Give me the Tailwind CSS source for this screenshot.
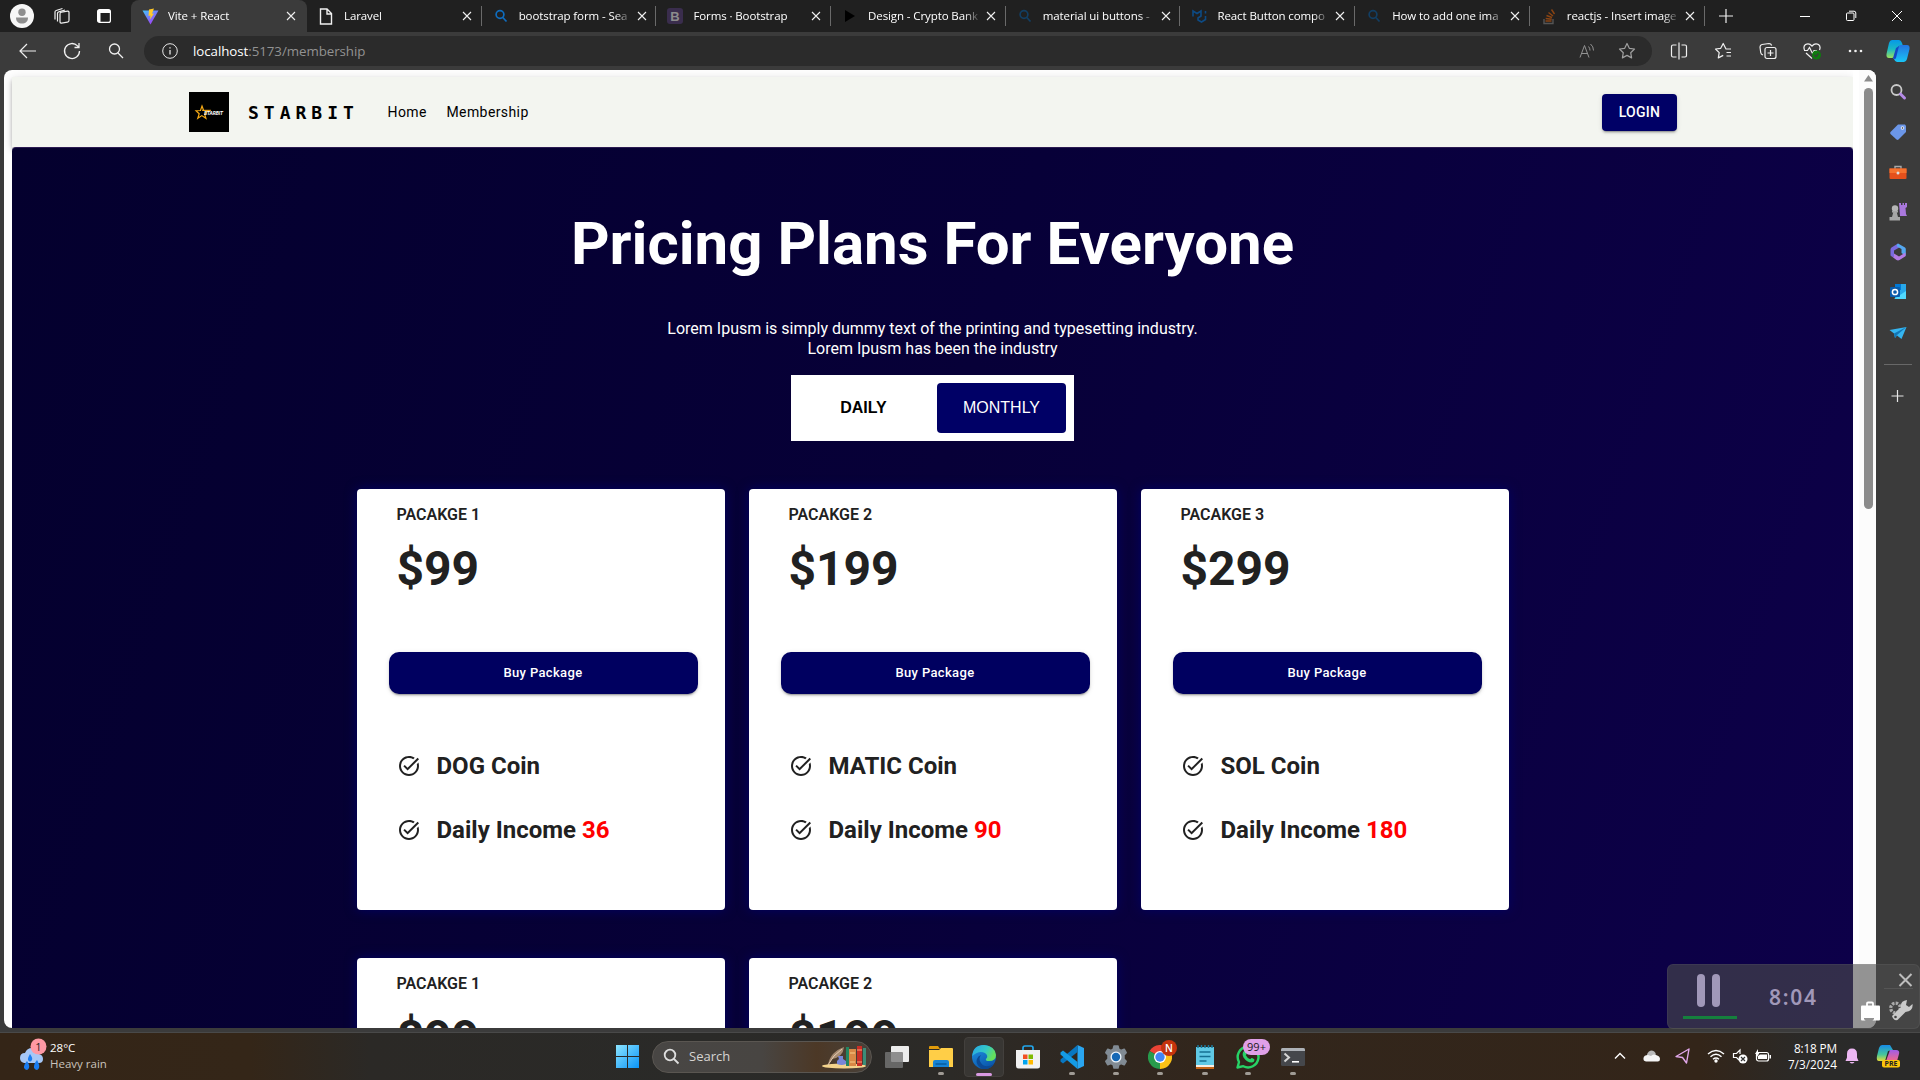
<!DOCTYPE html>
<html lang="en">
<head>
<meta charset="utf-8">
<title>Vite + React</title>
<script src="https://cdn.jsdelivr.net/npm/@tailwindcss/browser@4"></script>
</head>
<body class="w-[1920px] h-[1080px] overflow-hidden bg-[#3b3b3b] font-['Open_Sans',sans-serif] text-white relative flex flex-col">

<!-- tab strip -->
<header class="h-8 shrink-0 bg-[#202020] flex items-center">
  <div class="w-[131px] shrink-0 flex items-center">
    <svg class="ml-[10px] shrink-0" width="24" height="24" viewBox="0 0 24 24"><circle cx="12" cy="12" r="12" fill="#f7f7f7"/><circle cx="12" cy="8.300" r="3.700" fill="#8e8e8e"/><path d="M6 13.500h12c0 4-2.500 6-6 6s-6-2-6-6z" fill="#8e8e8e"/></svg>
    <svg class="ml-[19px] shrink-0" width="18" height="18" viewBox="0 0 18 18" fill="none" stroke="#f0f0f0" stroke-width="1.200"><rect x="7" y="4" width="9" height="11" rx="1.500" transform="skewY(-9) translate(0 2.500)"/><path d="M4.500 14.500V6.300q0-1.200 1.200-1.500L12 3M2 12.500V5q0-1.200 1.200-1.500L9.500 1.500"/></svg>
    <svg class="ml-[25px] shrink-0" width="16" height="16" viewBox="0 0 16 16"><rect x="1.600" y="1.600" width="12.800" height="12.800" rx="2" fill="none" stroke="#fff" stroke-width="1.200"/><path d="M2 2h12v3H2zM2 5h2.500v9H2z" fill="#fff"/></svg>
  </div>
  <nav id="tabs" class="flex h-8 text-[11.5px] tracking-[-0.1px]"></nav>
  <svg class="ml-[13px]" width="16" height="16" viewBox="0 0 16 16" stroke="#f0f0f0" stroke-width="1.200"><path d="M8 1v14M1 8h14"/></svg>
  <div class="ml-auto flex items-center pr-[17px] gap-[34px]">
    <svg width="12" height="12" viewBox="0 0 12 12" stroke="#fff"><path d="M1 6.500h10"/></svg>
    <svg width="12" height="12" viewBox="0 0 12 12" stroke="#fff" fill="none"><rect x="1.500" y="3" width="7.500" height="7.500" rx="1"/><path d="M4 1.200h5q1.800 0 1.800 1.800v5"/></svg>
    <svg width="12" height="12" viewBox="0 0 12 12" stroke="#fff"><path d="M1 1l10 10M11 1L1 11"/></svg>
  </div>
</header>

<!-- toolbar -->
<div class="h-[38px] shrink-0 flex items-center">
  <div class="w-[144px] shrink-0 flex items-center gap-[24px] pl-[18px]">
    <svg width="20" height="20" viewBox="0 0 20 20" fill="none" stroke="#f0f0f0" stroke-width="1.200"><path d="M18 10H2M9 3l-7 7 7 7"/></svg>
    <svg width="20" height="20" viewBox="0 0 20 20" fill="none" stroke="#f0f0f0" stroke-width="1.300"><path d="M17.500 10A7.500 7.500 0 1 1 15.500 4.900L17 6.500M17 2v4.500h-4.500"/></svg>
    <svg width="20" height="20" viewBox="0 0 20 20" fill="none" stroke="#f0f0f0" stroke-width="1.300"><circle cx="8.500" cy="8" r="5"/><path d="M12 12l5 5"/></svg>
  </div>
  <div class="w-[1508px] h-[30px] rounded-full bg-[#2b2b2b] flex items-center">
    <svg class="ml-[18px]" width="16" height="16" viewBox="0 0 16 16" fill="none" stroke="#e8e8e8"><circle cx="8" cy="8" r="7.300"/><path d="M8 7v4.500M8 4.300v1.300" stroke-width="1.300"/></svg>
    <div class="ml-[15px] pt-px text-[13.3px] leading-none tracking-[-0.05px] text-[#929292]"><span class="text-white">localhost</span>:5173/membership</div>
    <svg class="ml-auto" width="18" height="18" viewBox="0 0 18 18" fill="none" stroke="#929292"><path d="M2 15.500L6.500 3.500 11 15.500M3.500 11.500h6M10.500 4.500q1.500 1.500 1.500 4M12.500 2q3 2.500 3 6.500"/></svg>
    <svg class="ml-[22px] mr-[16px]" width="18" height="18" viewBox="0 0 18 18" fill="none" stroke="#a0a0a0" stroke-width="1.200" stroke-linejoin="round"><path d="M9 1.500l2.300 4.800 5.200.700-3.800 3.700.900 5.200L9 13.400l-4.600 2.500.900-5.200L1.500 7l5.200-.700z"/></svg>
  </div>
  <div class="flex items-center gap-[26px] pl-[18px]">
    <svg width="18" height="18" viewBox="0 0 18 18" fill="none" stroke="#f0f0f0" stroke-width="1.200"><path d="M9 .5v17M6.500 3H3q-1.500 0-1.500 1.500v9Q1.500 15 3 15h3.500M11.500 3H15q1.500 0 1.500 1.500v9Q16.500 15 15 15h-3.500"/></svg>
    <svg width="19" height="18" viewBox="0 0 19 18" fill="none" stroke="#f0f0f0" stroke-width="1.200" stroke-linejoin="round"><path d="M17 7h-5L9.200 1.500 6.700 6.300 1.500 7l3.700 3.700-.9 5.200 4.900-2.500M12.500 10.500H17M12.500 14H17"/></svg>
    <svg width="18" height="18" viewBox="0 0 18 18" fill="none" stroke="#f0f0f0" stroke-width="1.200"><rect x="6" y="5.500" width="11" height="11" rx="2"/><path d="M11.500 8v6M8.500 11h6M4 13Q2 12.500 1.700 10.500L1 5Q1 3 3 2.500L10 1.500Q12 1.500 12.700 3.500"/></svg>
    <svg width="18" height="18" viewBox="0 0 18 18" fill="none" stroke="#f0f0f0" stroke-width="1.200"><path d="M1.500 8Q0 4.500 2.500 2.500 6 .5 9 4q3-3.500 6.500-1.500Q18 4.500 16.500 8M3 11l6 5.500M1 8.500h3.500L6.500 5.500l3 6 1.500-3h3"/><circle cx="13.500" cy="13" r="4.500" fill="#0f7b0f" stroke="none"/><path d="M11.500 13l1.500 1.500 2.500-3" stroke="#3b3b3b"/></svg>
    <svg width="16" height="16" viewBox="0 0 16 16" fill="#f0f0f0"><circle cx="3" cy="8" r="1.300"/><circle cx="8.500" cy="8" r="1.300"/><circle cx="14" cy="8" r="1.300"/></svg>
    <svg class="-ml-[3px]" width="24" height="24" viewBox="0 0 24 24"><defs><linearGradient id="c1" x2="0" y2="1"><stop stop-color="#0797e8"/><stop offset=".5" stop-color="#19b8c5"/><stop offset="1" stop-color="#9be25c"/></linearGradient><linearGradient id="c2" x2="0" y2="1"><stop stop-color="#2374e1"/><stop offset="1" stop-color="#19c5f5"/></linearGradient></defs><path d="M6 1h7q2 0 3 3l1 3h-3q-2 0-3 4l-2 6q-.5 2-3 2H3q-3 0-2.500-4L3 4q.800-3 3-3z" fill="url(#c1)"/><path d="M18 23h-7q-2 0-3-3l-1-1q2 0 3-4l2-7q.500-2 3-2h6q3 0 2.500 4L21 20q-.8 3-3 3z" fill="url(#c2)"/><path d="M10 9l3-2-3 12q-1 2-3 0z" fill="#1348c4"/></svg>
  </div>
</div>

<!-- viewport and sidebar -->
<div class="h-[958px] shrink-0 flex pl-1">
  <main class="w-[1872px] h-[958px] bg-white rounded-lg overflow-hidden flex">
    <div class="w-[1849px] mr-[6px] pl-2 pt-[7px] h-[958px] overflow-hidden font-[Roboto,sans-serif]">
      <div class="h-[70px] bg-[#f3f5f0] pl-[177px] pr-[176px] flex items-center shadow-[0_2px_4px_-1px_rgba(0,0,0,.2),0_4px_5px_rgba(0,0,0,.14),0_1px_10px_rgba(0,0,0,.12)]">
        <svg width="40" height="40" viewBox="0 0 40 40"><rect width="40" height="40"/><path d="M13 14l1.600 4.500 5 .3-4 3 1.300 4.500-4.100-2.700-4 2.700 1.400-4.600-3.200-3 4.500-.2z" fill="none" stroke="#f5a914" stroke-width="1.200"/><path d="M13 18.300h9" stroke="#f5a914"/><text x="15" y="23" font-family="Roboto" font-style="italic" font-weight="700" font-size="5" fill="#fff" textLength="19">STARBIT</text></svg>
        <span class="ml-[19px] w-[139.5px] font-['DejaVu_Sans_Mono',monospace] font-bold text-[18px] tracking-[5px] text-black">STARBIT</span>
        <span class="w-[59px] text-[14px] tracking-[0.4px] text-black">Home</span>
        <span class="text-[14px] tracking-[0.4px] text-black">Membership</span>
        <button class="ml-auto w-[75px] h-[37px] mt-[1px] rounded bg-[#000066] text-[14px] font-medium tracking-[0.3px] shadow-[0_3px_1px_-2px_rgba(0,0,0,.2),0_2px_2px_rgba(0,0,0,.14),0_1px_5px_rgba(0,0,0,.12)]">LOGIN</button>
      </div>
      <section class="relative h-[1400px] rounded-t bg-linear-[108deg,#04002e_0%,#070038_45%,#0e004c_100%] border-t border-[#2b1a52] flex flex-col items-center">
        <h1 class="mt-[60px] text-[60px] leading-[72px] font-bold whitespace-nowrap">Pricing Plans For Everyone</h1>
        <p class="mt-[39px] text-center text-[16px] leading-[20px]">Lorem Ipusm is simply dummy text of the printing and typesetting industry.<br>Lorem Ipusm has been the industry</p>
        <div class="mt-[16px] w-[283px] h-[66px] bg-white p-2 flex text-[16px] font-['Liberation_Sans',Arial,sans-serif]">
          <div class="w-[129px] mr-[9px] flex items-center justify-center text-black font-bold">DAILY</div>
          <div class="w-[129px] rounded bg-[#000066] flex items-center justify-center">MONTHLY</div>
        </div>
        <div id="plans" class="mt-12 w-[1152px] grid grid-cols-3 gap-x-6 gap-y-12 text-[#212121]"></div>
      </section>
    </div>
    <div class="w-[17px] pl-px flex flex-col items-center pt-[5px] bg-[#fcfcfc]">
      <svg width="9" height="7" viewBox="0 0 9 7" fill="#8b8b8b"><path d="M4.500 0L9 6.500H0z"/></svg>
      <div class="mt-[6px] w-[9px] h-[421px] rounded-full bg-[#8b8b8b]"></div>
    </div>
  </main>
  <aside class="w-11 flex flex-col items-center pt-[13px] pr-px gap-[22.100px]">
    <svg class="shrink-0" width="18" height="18" viewBox="0 0 18 18" fill="none"><circle cx="7.500" cy="7" r="5" stroke="#c9c9c9" stroke-width="1.800"/><path d="M11.500 11l4 4" stroke="#b58be8" stroke-width="3" stroke-linecap="round"/></svg>
    <svg class="shrink-0" width="18" height="18" viewBox="0 0 18 18"><path d="M9 1.500L16 1.500 17 3v6L9.500 16.500q-1 .8-2 0L1.500 11q-.8-1 0-2z" fill="#6b96e8"/><circle cx="13.500" cy="5" r="1.800" fill="#e4ecff"/><circle cx="13.500" cy="5" r=".8" fill="#333"/></svg>
    <svg class="shrink-0" width="18" height="18" viewBox="0 0 18 18"><path d="M6 6V3.500h6V6" fill="none" stroke="#a8a8a8" stroke-width="1.400"/><path d="M.5 5.500h17V15q0 1-1 1h-15q-1 0-1-1z" fill="#e5501b"/><path d="M.5 5.500h17V10H.5z" fill="#f5722e"/><circle cx="9" cy="10" r="1.500" fill="#ddd"/></svg>
    <svg class="shrink-0" width="18" height="18" viewBox="0 0 18 18"><path d="M10 0h2v2h1.500V0h1.500v2h1V0h2v4l-1.500 1 .5 6 1 2h-7z" fill="#a978dd"/><circle cx="6" cy="5.500" r="3.200" fill="#b5b5b5"/><path d="M3 8h6v1.500H7.800L9 14h2v3.500H.5V14H3l1.200-4.500H3z" fill="#a6a6a6"/></svg>
    <svg class="shrink-0" width="18" height="18" viewBox="0 0 18 18"><path d="M9 .6L2.500 4.500q-1 .8-1 2v6L5 14.500V7.500l7-4z" fill="#7a6be0"/><path d="M9 .6l7 4q.8.600.8 1.600V13L12.500 10V6L8 3.500q-1-1.500 1-2.900z" fill="#55a8f0"/><path d="M1.500 12.500l6 4.500q1.500.8 3 0l6-3.800V9.500L10 13.500 5 10.500v3.800z" fill="#b47be5"/></svg>
    <svg class="shrink-0" width="18" height="18" viewBox="0 0 18 18"><path d="M6 1h11v15H6z" fill="#28a8ea"/><path d="M6 1h6v6H6z" fill="#0078d4"/><path d="M17 8v8H5z" fill="#50d9ff"/><rect x="1" y="4" width="10" height="10" rx="1" fill="#0a5cab"/><circle cx="6" cy="9" r="2.600" fill="none" stroke="#fff" stroke-width="1.500"/></svg>
    <svg class="shrink-0" width="18" height="18" viewBox="0 0 18 18"><path d="M.5 6L17.500 3 12.500 15 8 11.500 6 14 5 9.500z" fill="#35b5f0"/><path d="M17.500 3L5 9.500 6 14l2-3z" fill="#1177b8"/></svg>
    <div class="w-7 h-px shrink-0 bg-[#686868]"></div>
    <svg class="shrink-0" width="18" height="18" viewBox="0 0 18 18" stroke="#e6e6e6" stroke-width="1.200"><path d="M8.500 3v12M2.500 9h12"/></svg>
  </aside>
</div>
<div class="h-[5px] shrink-0 border-b border-[#494949]"></div>

<!-- taskbar -->
<footer class="relative h-[47px] shrink-0 bg-linear-[90deg,#342517_0px,#342618_250px,#2b2926_370px,#2a2a28_700px,#2c2a27_950px,#32261c_1200px,#332519_1700px,#2a2a29_1810px,#2a2a2a_1920px] flex items-center">
  <div class="flex items-center w-[616px] pl-[18px] text-[11.500px] leading-4">
    <svg class="-mt-[2px]" width="32" height="38" viewBox="0 0 32 38"><path d="M6 26q-4-1-4-5 0-5 5-5 2-5 7-5 6 0 7 6 4 1 4 5t-4 4z" fill="#a6c7f6"/><path d="M12 17q3 4 2 6-2 3-4 0-.5-2 2-6zM9 24q3 4 2 7-2 4-5 0-.5-3 3-7zM19 23q3 5 2 8-2 4-5 0-.5-4 3-8z" fill="#1a7cf0"/><circle cx="20.500" cy="9.500" r="8" fill="#ff99a4"/><text x="20.500" y="13.500" text-anchor="middle" font-size="11" font-family="Open Sans" fill="#222">1</text></svg>
    <div class="-mt-[2px]"><div>28°C</div><div class="text-[#c9c3bc]">Heavy rain</div></div>
  </div>
  <svg width="23" height="23" viewBox="0 0 23 23"><defs><linearGradient id="w" x2="1" y2="1"><stop stop-color="#8be4ff"/><stop offset="1" stop-color="#0a94f8"/></linearGradient></defs><path d="M0 0h11v11H0zM12 0h11v11H12zM0 12h11v11H0zM12 12h11v11H12z" fill="url(#w)"/></svg>
  <div class="ml-[13px] w-[220px] h-8 rounded-full bg-linear-[90deg,#484644_0%,#484542_50%,#4c3826_75%,#48413a_100%] border border-[#5a5651] flex items-center">
    <svg class="ml-[10px]" width="17" height="17" viewBox="0 0 17 17" fill="none" stroke="#dedede" stroke-width="1.800"><circle cx="7" cy="7" r="5.300"/><path d="M11 11l4.500 4.500"/></svg>
    <span class="ml-[9px] text-[13px] text-[#d6d4d2]">Search</span>
    <svg class="ml-auto mr-[4px]" width="46" height="26" viewBox="0 0 46 26"><ellipse cx="23" cy="22" rx="22" ry="2.500" fill="#f4d38c"/><path d="M7 21Q9 8 23 3 22 13 11 15z" fill="#a68b72"/><path d="M7 21Q12 11 21 5" stroke="#e5cdb3" fill="none"/><path d="M17 12h5v3l3 2v3q-4 2-9 0v-3l2-2z" fill="#7886d8"/><path d="M25 3h3v19h-3z" fill="#238561"/><path d="M28 5h7v17h-7z" fill="#d98845"/><path d="M29 9h5M29 18h5" stroke="#f6cc89"/><path d="M36 2h5v20h-5z" fill="#c92e26"/><path d="M36 6h5M36 18h5" stroke="#f6a87c"/><path d="M42 4h3v17h-3z" fill="#3b8d78"/></svg>
  </div>
  <svg class="ml-[13px]" width="24" height="24" viewBox="0 0 24 24"><rect x="6" y="1" width="18" height="16" rx="1" fill="#ececec"/><rect x="0" y="7" width="18" height="16" rx="1" fill="#777" fill-opacity=".8"/></svg>
  <div class="ml-[20px] relative"><svg width="24" height="24" viewBox="0 0 24 24"><path d="M0 2q0-1 1-1h8l2 3H0z" fill="#e19b0a"/><path d="M0 5h10l2-2h11q1 0 1 1v18H0z" fill="#ffce47"/><path d="M4 22v-5q0-2 2-2h12q2 0 2 2v5z" fill="#1783d4"/><path d="M6.500 19h11" stroke="#075d9f" stroke-width="1.500"/></svg><i class="absolute left-[9px] top-[27px] w-[6px] h-[3px] rounded-full bg-[#a09b95]"></i></div>
  <div class="ml-[11px] w-10 h-10 rounded border border-[#43403d] bg-[#383633] relative flex items-center justify-center"><svg width="24" height="24" viewBox="0 0 24 24"><defs><linearGradient id="e1" x2="1" y2=".4"><stop stop-color="#26a5e9"/><stop offset=".6" stop-color="#35c9c5"/><stop offset="1" stop-color="#65e05b"/></linearGradient><linearGradient id="e2" x2=".5" y2="1"><stop stop-color="#2196e6"/><stop offset="1" stop-color="#0b58ac"/></linearGradient></defs><circle cx="12" cy="12" r="12" fill="url(#e2)"/><path d="M.3 11Q1 0 12 0q11 1 12 10 0 6-7 6-4 0-3-2 3-3-1-6Q7 5 .3 11z" fill="url(#e1)"/><path d="M9 10q-3 4 0 8 4 6 13 1-4 6-12 5Q3 19 5 14q1-3 4-4z" fill="#0c4a94"/></svg><i class="absolute left-[11px] top-[35px] w-4 h-[3px] rounded-full bg-[#d99ae2]"></i></div>
  <svg class="ml-[12px]" width="24" height="24" viewBox="0 0 24 24"><path d="M7 6V3q0-2 2-2h6q2 0 2 2v3" fill="none" stroke="#22a7ed" stroke-width="1.700"/><path d="M0 5h24v16q0 2.500-2.500 2.500h-19Q0 23.500 0 21z" fill="#f1f1f1"/><path d="M7 9.500h4.500V14H7z" fill="#f25022"/><path d="M12.500 9.500H17V14h-4.500z" fill="#7fba00"/><path d="M7 15h4.500v4.500H7z" fill="#00a4ef"/><path d="M12.500 15H17v4.500h-4.500z" fill="#ffb900"/></svg>
  <div class="ml-[20px] relative"><svg width="24" height="24" viewBox="0 0 24 24"><path d="M17.500 0L24 3v18l-6.500 3z" fill="#2aa6f1"/><path d="M17.500 0v7L3 18.500.5 16.500v-2z" fill="#0877c2"/><path d="M17.500 24v-7L3 5.500.5 7.500v2z" fill="#149be5"/></svg><i class="absolute left-[9px] top-[27px] w-[6px] h-[3px] rounded-full bg-[#a09b95]"></i></div>
  <div class="ml-[20px] relative"><svg width="24" height="24" viewBox="0 0 24 24"><path d="M10 1h4l.8 3.200 2.200 1.200 3.200-1.200 2 3.500-2.200 2.300v4l2.200 2.300-2 3.500-3.200-1.200-2.200 1.200L14 23h-4l-.8-3.200L7 18.600l-3.200 1.200-2-3.500L4 14v-4L1.800 7.700l2-3.500L7 5.400l2.200-1.200z" fill="#818b94" stroke="#818b94" stroke-width="1.500" stroke-linejoin="round"/><circle cx="12" cy="12" r="5.500" fill="#ecf4fc"/><circle cx="12" cy="12" r="4.200" fill="#1568b6"/></svg><i class="absolute left-[9px] top-[27px] w-[6px] h-[3px] rounded-full bg-[#a09b95]"></i></div>
  <div class="ml-[20px] relative"><svg width="24" height="24" viewBox="0 0 24 24"><path d="M12 12L1.600 6A12 12 0 0 1 22.400 6z" fill="#ea4335"/><path d="M12 12L22.400 6A12 12 0 0 1 12 24z" fill="#fbc116"/><path d="M12 12v12A12 12 0 0 1 1.600 6z" fill="#279b4c"/><path d="M12 24l6-9-6-3z" fill="#fbc116"/><circle cx="12" cy="12" r="6" fill="#fff"/><circle cx="12" cy="12" r="4.700" fill="#4285f4"/></svg><b class="absolute left-[13px] -top-[5px] w-4 h-4 rounded-full bg-[#c5330d] text-[10px] leading-4 text-center font-semibold">N</b><i class="absolute left-[9px] top-[27px] w-[6px] h-[3px] rounded-full bg-[#a09b95]"></i></div>
  <div class="ml-[21px] relative"><svg width="24" height="24" viewBox="0 0 24 24"><path d="M3 2h18v19H3z" fill="#60c9e5"/><path d="M3 20h18v2H3z" fill="#f7eee4"/><path d="M3 22h18v2H3z" fill="#c46416"/><path d="M5 0v3M8.500 0v3M12 0v3M15.500 0v3M19 0v3" stroke="#1b789b" stroke-width="1.500"/><path d="M6.500 7h11M6.500 11.500h11M6.500 16h7" stroke="#147092" stroke-width="1.600"/></svg><i class="absolute left-[9px] top-[27px] w-[6px] h-[3px] rounded-full bg-[#a09b95]"></i></div>
  <div class="ml-[19px] relative"><svg width="24" height="24" viewBox="0 0 24 24"><path d="M1.500 22.500L3 17a10.400 10.400 0 1 1 4.300 4.200z" fill="none" stroke="#27d366" stroke-width="2.400" stroke-linejoin="round"/><path d="M8 6q1-.7 1.800.5l.8 2q.2.800-.8 1.700 1.500 3 4.500 4 1-1.500 1.800-1.200l2.200 1.200q.7 3-2.800 3.300Q11 17.500 7.500 12.500 5.500 8.500 8 6z" fill="#27d366"/></svg><b class="absolute left-[7px] -top-[6px] w-[27px] h-4 rounded-full bg-[#dfa0e8] text-[#1b1b1b] text-[11px] leading-4 text-center font-normal">99+</b><i class="absolute left-[9px] top-[27px] w-[6px] h-[3px] rounded-full bg-[#a09b95]"></i></div>
  <div class="ml-[21px] relative"><svg width="24" height="24" viewBox="0 0 24 24"><rect y="3" width="24" height="18" rx="1.500" fill="#45474b"/><path d="M0 4.500Q0 3 1.500 3h21Q24 3 24 4.500V6H0z" fill="#aeb2b7"/><path d="M3.500 8.500l4.500 4-4.500 4" fill="none" stroke="#d5d5d5" stroke-width="2"/><path d="M11 16.800h7" stroke="#fff" stroke-width="1.600"/></svg><i class="absolute left-[9px] top-[27px] w-[6px] h-[3px] rounded-full bg-[#a09b95]"></i></div>

  <div class="ml-auto -mt-[2px] flex items-center pr-[20px]">
    <svg class="mr-[17px]" width="12" height="12" viewBox="0 0 12 12" fill="none" stroke="#fff" stroke-width="1.400"><path d="M1 8.500l5-5 5 5"/></svg>
    <svg class="mr-[15px]" width="17" height="14" viewBox="0 0 17 14"><path d="M4 9Q3 3 8 1.500q4 0 5 4z" fill="#b9b9b9"/><path d="M3 12.500q-3-.5-2.500-3.500Q1 6 5 6l3 1q2-2.500 5-1 4 1 4 4t-3 2.500z" fill="#f5f5f5"/></svg>
    <svg class="mr-[16px]" width="16" height="16" viewBox="0 0 16 16" fill="none" stroke="#e3a8ec" stroke-width="1.400" stroke-linejoin="round"><path d="M14 1L1 8.500l6.500 1 4 5.500z"/></svg>
    <svg class="mr-[7px]" width="18" height="14" viewBox="0 0 18 14" fill="none" stroke="#fff" stroke-width="1.400"><path d="M1 5q8-7 16 0M3.500 7.700q5.500-5 11 0M6 10.200q3-2.500 6 0"/><circle cx="9" cy="12" r="1" fill="#fff"/></svg>
    <svg class="mr-[6px]" width="16" height="16" viewBox="0 0 16 16" fill="none" stroke="#fff" stroke-width="1.200"><path d="M7 12L4.500 9.500H1.500v-4h3L8 2v4"/><circle cx="11" cy="11" r="4.500" fill="#fff" stroke="none"/><path d="M9 9l4 4M13 9l-4 4" stroke="#333"/></svg>
    <svg class="mr-[15px]" width="18" height="14" viewBox="0 0 18 14"><rect x="2.500" y="3.500" width="12" height="8.500" rx="2" fill="none" stroke="#fff" stroke-width="1.200"/><path d="M6 5.500h7V10H4V7zM15.500 6h1.500v3.500h-1.500z" fill="#fff"/><path d="M4 0L1 5h2v3l3-5H4z" fill="#fff"/></svg>
    <div class="w-[50px] flex flex-col items-end text-[11.800px] leading-4 whitespace-nowrap"><span class="tracking-[-0.15px]">8:18 PM</span><span>7/3/2024</span></div>
    <svg class="ml-[8px]" width="14" height="16" viewBox="0 0 14 16" fill="#ecb7f2"><path d="M7 .5q5 0 5 5.500v3.500L13.500 13H.5L2 9.500V6Q2 .5 7 .5zM4.500 14h5q-2.500 3-5 0z"/></svg>
    <svg class="ml-[17px]" width="24" height="24" viewBox="0 0 24 24"><defs><linearGradient id="p1" x2="0" y2="1"><stop stop-color="#168be8"/><stop offset=".6" stop-color="#46c69a"/><stop offset="1" stop-color="#e5dc37"/></linearGradient><linearGradient id="p2" x2="0" y2="1"><stop stop-color="#a05de8"/><stop offset="1" stop-color="#f36a87"/></linearGradient></defs><path d="M6 1h8l3 5-5 1-3 10H3q-3 0-2-5L3 4q1-3 3-3z" fill="url(#p1)"/><path d="M14 6h6q4 0 3 4l-2 7H10z" fill="url(#p2)"/><rect x="6" y="16" width="18" height="7.500" rx="2" fill="#fcc50b"/><text x="15" y="22.300" text-anchor="middle" font-family="Open Sans" font-size="7" font-weight="700" fill="#222">PRE</text></svg>
  </div>
</footer>

<!-- floating recorder panel -->
<div class="absolute left-[1667px] top-[964px] w-[253px] h-[65px] rounded-md border border-white/5 bg-[#4d4d4d]/60 flex">
  <div class="ml-[15px] w-[54px] flex flex-col items-center pt-[9px]">
    <div class="flex gap-[7px] -ml-[4px]"><i class="w-2 h-[33px] rounded-sm bg-[#a198b9]"></i><i class="w-2 h-[33px] rounded-sm bg-[#a198b9]"></i></div>
    <div class="mt-[9px] w-[54px] h-[3px] bg-[#15803d]"></div>
  </div>
  <div class="ml-[32px] pt-[17px] w-[91px] text-[21px] leading-[30px] font-semibold tracking-[1.700px] text-[#a198b9] font-['Noto_Sans',sans-serif]">8:04</div>
  <svg class="mt-[36px] shrink-0" width="22" height="24" viewBox="0 0 22 24"><path d="M7 5V2.500q0-1 1-1h4q1 0 1 1V5" fill="none" stroke="#fff" stroke-width="1.800"/><rect x="1" y="4.500" width="19" height="15" rx="1" fill="#fff"/><path d="M4 17h10v1l-5 6-5-6z" fill="#929292"/></svg>
  <svg class="absolute left-[216px] top-[7px]" width="29" height="50" viewBox="0 0 29 50"><path d="M15.500 2l12 12M27.500 2l-12 12" stroke="#bdbdbd" stroke-width="2"/><path d="M0 16.500h29" stroke="#555"/><circle cx="11.500" cy="36" r="4.800" fill="none" stroke="#aaa" stroke-width="3.200" stroke-dasharray="2.500 1.200"/><path d="M8 44l9-9q-1-6 6-7l-1 5 3 2 3.500-3q1 7-7 8l-8 8q-4 1-5.500-4z" fill="#c9c9c9"/><circle cx="11.500" cy="45" r="1.300" fill="#444"/><circle cx="12" cy="36.500" r="1.500" fill="#444"/></svg>
</div>

<script>
const search = c => `<svg width="14" height="14" viewBox="0 0 14 14" fill="none" stroke="${c}" stroke-width="1.700"><circle cx="6" cy="5.500" r="3.900"/><path d="M8.800 8.500L12.500 12.500"/></svg>`;
const tabs = [
  ['Vite + React', '<svg width="17" height="17" viewBox="0 0 17 17"><defs><linearGradient id="v" x2=".7" y2="1"><stop stop-color="#41c5fb"/><stop offset="1" stop-color="#a639f5"/></linearGradient></defs><path d="M.5 2.500L16.500 2.500 8.500 16.500z" fill="url(#v)"/><path d="M12 .5L7 1.500 6.500 8l2-.4L8 11.500l4-6-2 .2z" fill="#ffc928"/></svg>'],
  ['Laravel', '<svg width="14" height="17" viewBox="0 0 14 17" fill="none" stroke="#f0f0f0" stroke-width="1.400"><path d="M1.500 1h6.500l4.500 4.500V16h-11zM8 1v5h4.500"/></svg>'],
  ['bootstrap form - Sea', search('#0f6cbd')],
  ['Forms · Bootstrap', '<svg width="16" height="16" viewBox="0 0 16 16"><rect width="16" height="16" rx="3" fill="#3a2d4d"/><text x="8" y="12.500" text-anchor="middle" font-family="Liberation Sans" font-weight="700" font-size="13" fill="#8c8c8c">B</text></svg>'],
  ['Design - Crypto Bank', '<svg width="14" height="14" viewBox="0 0 14 14"><path d="M2 1l10 6-10 6z" fill="#000"/></svg>'],
  ['material ui buttons -', search('#123e63')],
  ['React Button compo', '<svg width="15" height="14" viewBox="0 0 15 14" fill="none" stroke="#0d4a83" stroke-width="1.600"><path d="M1 7.500V2l4 2.500L9 2v5l-3 2v2l3.500 2 4-2.500V7M13.500 2v2.500"/></svg>'],
  ['How to add one ima', search('#123e63')],
  ['reactjs - Insert image', '<svg width="14" height="17" viewBox="0 0 14 17" fill="none" stroke-width="1.400"><path d="M2 11v4.500h9V11" stroke="#555"/><path d="M3.500 13h6M3.700 10.500l6 .8M4.500 7.500l5.500 2M6.500 4.500l4.500 3.500M9.500 1.500l3 4.500" stroke="#8a4413"/></svg>'],
];
document.getElementById('tabs').innerHTML = tabs.map(([title, icon], i) => `
  <div class="${i === 0 ? 'w-[176px] bg-[#3b3b3b] rounded-t-lg' : 'w-[174.700px]'} h-8 flex items-center relative shrink-0">
    <span class="ml-[10px] w-[18px] flex justify-center shrink-0">${icon}</span>
    <span class="ml-[9px] w-[113px] whitespace-nowrap mask-r-from-85%">${title}</span>
    <svg class="ml-[5px] shrink-0" width="10" height="10" viewBox="0 0 10 10" stroke="#f0f0f0" stroke-width="1.100"><path d="M1 1l8 8M9 1L1 9"/></svg>
    ${i > 0 ? '<i class="absolute right-0 top-[6px] w-px h-5 bg-[#6a6a6a]"></i>' : ''}
  </div>`).join('');

const check = '<svg class="shrink-0" width="24" height="24" viewBox="0 0 24 24" fill="#212121"><path d="M22 5.180 10.590 16.600l-4.240-4.240 1.410-1.410 2.830 2.830 10-10L22 5.180zm-2.210 5.040c.13.570.21 1.170.21 1.780 0 4.420-3.580 8-8 8s-8-3.580-8-8 3.580-8 8-8c1.580 0 3.040.46 4.280 1.250l1.440-1.440C16.100 2.670 14.130 2 12 2 6.480 2 2 6.480 2 12s4.480 10 10 10 10-4.480 10-10c0-1.190-.22-2.330-.6-3.390l-1.610 1.610z"/></svg>';
const plans = [[1, 99, 'DOG', 36], [2, 199, 'MATIC', 90], [3, 299, 'SOL', 180], [1, 99, 'DOG', 36], [2, 199, 'MATIC', 90]];
document.getElementById('plans').innerHTML = plans.map(([n, price, coin, income]) => `
  <article class="h-[421px] rounded bg-white shadow-[0_0_12px_#000066] pt-[14px] pl-8 flex flex-col">
    <div class="pl-2 text-[16px] leading-6 font-semibold">PACAKGE ${n}</div>
    <div class="pl-2 mt-[14px] text-[48px] leading-[56px] font-bold">$${price}</div>
    <button class="mt-[55px] w-[309px] h-[42px] shrink-0 rounded-[10px] bg-[#000060] text-white text-[13px] font-medium tracking-[0.35px] shadow-[0_3px_1px_-2px_rgba(0,0,0,.2),0_2px_2px_rgba(0,0,0,.14),0_1px_5px_rgba(0,0,0,.12)]">Buy Package</button>
    <div class="pl-2 mt-[56px] h-8 flex items-center gap-4 text-[24px] leading-8 font-bold">${check}<span>${coin} Coin</span></div>
    <div class="pl-2 mt-[32px] h-8 flex items-center gap-4 text-[24px] leading-8 font-bold">${check}<span>Daily Income <span class="text-[#ff0000]">${income}</span></span></div>
  </article>`).join('');
</script>
</body>
</html>
